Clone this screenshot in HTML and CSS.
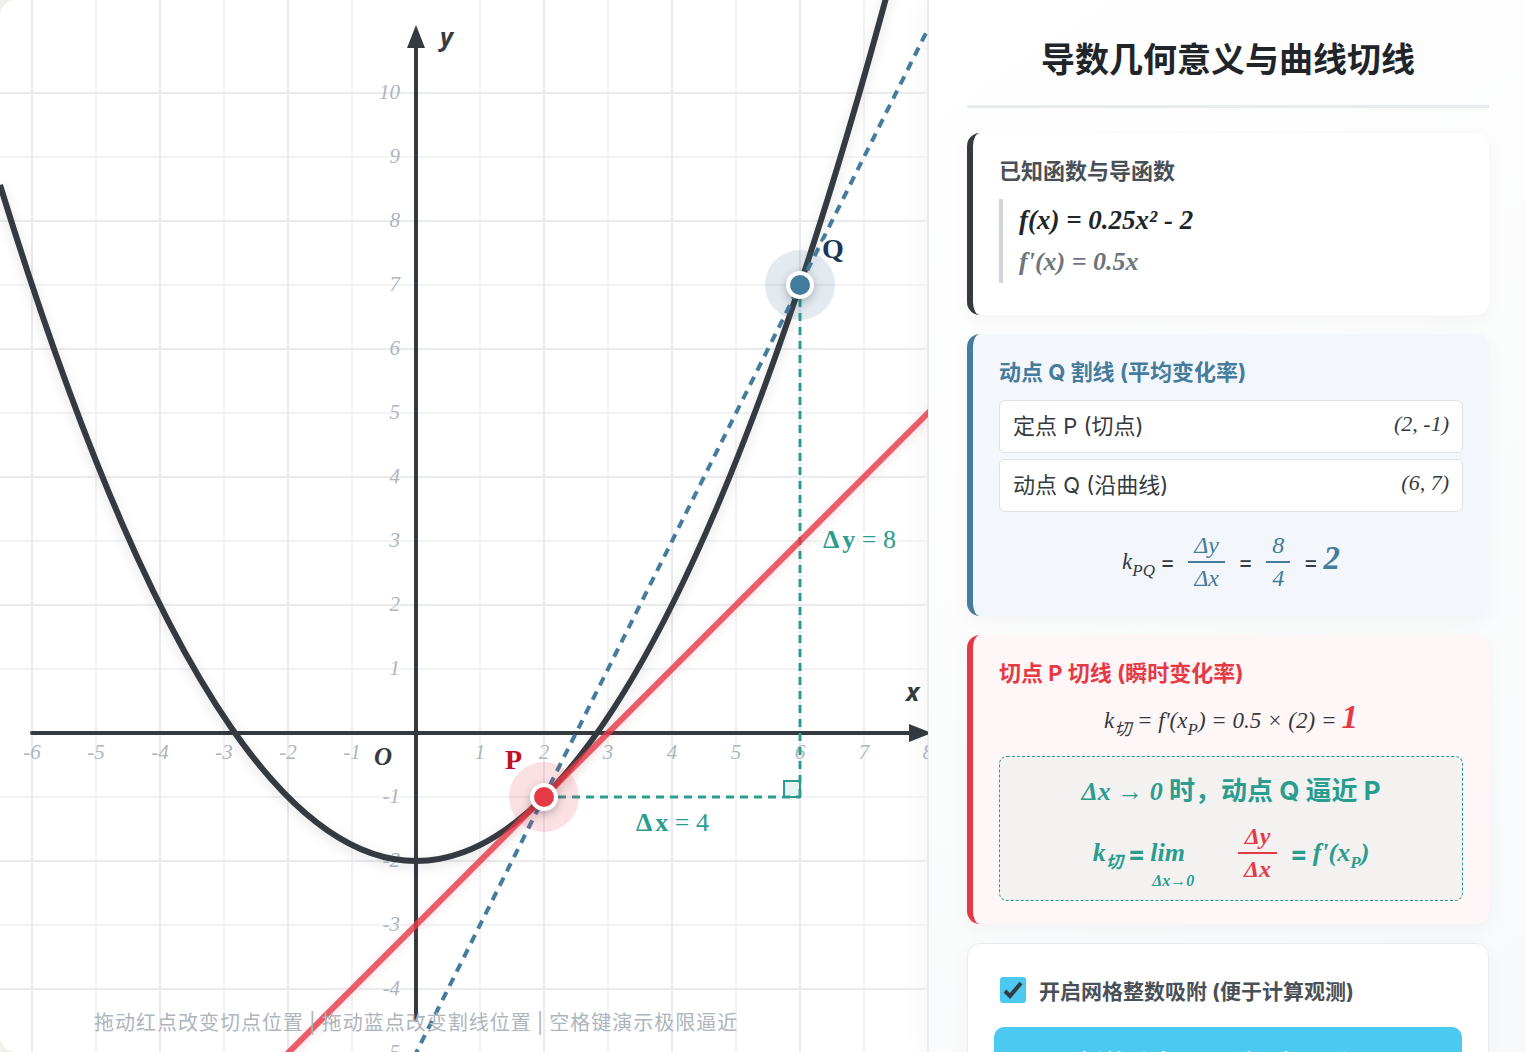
FILE: index.html
```html
<!DOCTYPE html>
<html lang="zh-CN">
<head>
<meta charset="utf-8">
<title>导数几何意义与曲线切线</title>
<link rel="stylesheet" href="styles.css">
</head>
<body>
<main class="app">
  <section class="board">
    <svg class="plot" viewBox="0 0 928 1052" preserveAspectRatio="xMidYMid slice" role="img" aria-label="函数图像">
      <path class="grid-minor" d="M96 0V1052M224 0V1052M352 0V1052M480 0V1052M608 0V1052M736 0V1052M864 0V1052M0 157H928M0 285H928M0 413H928M0 541H928M0 669H928M0 797H928M0 925H928"/>
      <path class="grid-major" d="M32 0V1052M160 0V1052M288 0V1052M544 0V1052M672 0V1052M800 0V1052M928 0V1052M0 93H928M0 221H928M0 349H928M0 477H928M0 605H928M0 861H928M0 989H928"/>
      <path class="axis" d="M32 733H912M416 1020V46"/>
      <path class="arrow" d="M416 25L425 48H407ZM932 733L909 742V724Z"/>
      <g class="ticks ticks-x">
        <text x="32" y="759">-6</text><text x="96" y="759">-5</text><text x="160" y="759">-4</text><text x="224" y="759">-3</text><text x="288" y="759">-2</text><text x="352" y="759">-1</text><text x="480" y="759">1</text><text x="544" y="759">2</text><text x="608" y="759">3</text><text x="672" y="759">4</text><text x="736" y="759">5</text><text x="800" y="759">6</text><text x="864" y="759">7</text><text x="928" y="759">8</text>
      </g>
      <g class="ticks ticks-y">
        <text x="400" y="99">10</text><text x="400" y="163">9</text><text x="400" y="227">8</text><text x="400" y="291">7</text><text x="400" y="355">6</text><text x="400" y="419">5</text><text x="400" y="483">4</text><text x="400" y="547">3</text><text x="400" y="611">2</text><text x="400" y="675">1</text><text x="400" y="803">-1</text><text x="400" y="867">-2</text><text x="400" y="931">-3</text><text x="400" y="995">-4</text><text x="400" y="1059">-5</text>
      </g>
      <text class="origin" x="374" y="765">O</text>
      <text class="axis-name" x="440" y="46">y</text>
      <text class="axis-name" x="906" y="701">x</text>
      <path class="curve" d="M0 185Q464 1693 928 -163"/>
      <path class="secant" d="M416 1053L928 29"/>
      <path class="delta" d="M544 797H800M800 797V285"/>
      <path class="corner" d="M784 797V781H800V797Z"/>
      <path class="tangent" d="M280 1061L936 405"/>
      <circle class="halo-p" cx="544" cy="797" r="35"/>
      <circle class="halo-q" cx="800" cy="285" r="35"/>
      <circle class="dot dot-p" cx="544" cy="797" r="12"/>
      <circle class="dot dot-q" cx="800" cy="285" r="12"/>
      <text class="tag tag-p" x="505" y="769">P</text>
      <text class="tag tag-q" x="822" y="258">Q</text>
      <text class="tag tag-delta" x="636" y="831">Δ<tspan dx="3">x</tspan><tspan class="amount"> = 4</tspan></text>
      <text class="tag tag-delta" x="823" y="548">Δ<tspan dx="3">y</tspan><tspan class="amount"> = 8</tspan></text>
    </svg>
    <p class="hint"><span>拖动红点改变切点位置</span><span>|</span><span>拖动蓝点改变割线位置</span><span>|</span><span>空格键演示极限逼近</span></p>
  </section>

  <aside class="panel">
    <h1 class="title">导数几何意义与曲线切线</h1>

    <section class="card card-dark">
      <h2 class="card-title">已知函数与导函数</h2>
      <div class="functions">
        <p class="fn">f(x) = 0.25x² - 2</p>
        <p class="fn fn-sub">f'(x) = 0.5x</p>
      </div>
    </section>

    <section class="card card-blue">
      <h2 class="card-title">动点 Q 割线 (平均变化率)</h2>
      <dl class="rows">
        <div class="row"><dt>定点 P (切点)</dt><dd>(2, -1)</dd></div>
        <div class="row"><dt>动点 Q (沿曲线)</dt><dd>(6, 7)</dd></div>
      </dl>
      <p class="equation equation-tall">
        <span class="math">k<sub>PQ</sub></span><span class="eq">=</span>
        <span class="frac"><span>Δy</span><span>Δx</span></span><span class="eq">=</span>
        <span class="frac"><span>8</span><span>4</span></span><span class="eq">=</span><strong class="math result">2</strong>
      </p>
    </section>

    <section class="card card-red">
      <h2 class="card-title">切点 P 切线 (瞬时变化率)</h2>
      <p class="equation"><span class="math">k<sub>切</sub> = f'(x<sub>P</sub>) = 0.5 × (2) =</span><strong class="math result">1</strong></p>
      <div class="limit">
        <p class="limit-head"><span class="math">Δx → 0</span> 时，动点 Q 逼近 P</p>
        <p class="limit-eq">
          <span class="math">k<sub>切</sub></span><span class="eq">=</span>
          <span class="math lim">lim<small>Δx→0</small></span>
          <span class="frac frac-red"><span>Δy</span><span>Δx</span></span><span class="eq">=</span><span class="math">f'(x<sub>P</sub>)</span>
        </p>
      </div>
    </section>

    <section class="card card-controls">
      <label class="check"><input type="checkbox" checked>开启网格整数吸附 (便于计算观测)</label>
      <button class="play" type="button">播放动点 Q 逼近 P 极限动画</button>
    </section>
  </aside>
</main>
</body>
</html>
```
FILE: styles.css
```css
* { box-sizing: border-box; margin: 0; }

body {
  height: 100vh;
  overflow: hidden;
  background: #f1efea;
  color: #343a40;
  font-family: Inter, "Noto Sans CJK SC", sans-serif;
}

.app {
  display: grid;
  grid-template-columns: minmax(0, 1fr) 598px;
  height: 100vh;
  border-radius: 16px 0 0 16px;
  overflow: hidden;
  background: #fff;
}

/* Graph */
.board { position: relative; min-width: 0; overflow: hidden; }
.plot { display: block; width: 100%; height: 100%; }
.plot path { fill: none; }
.plot .grid-minor { stroke: #f1f3f5; stroke-width: 2; }
.plot .grid-major { stroke: #e9ebef; stroke-width: 2; }
.plot .axis { stroke: #343a40; stroke-width: 4; stroke-linecap: round; }
.plot .arrow { fill: #343a40; }
.plot .curve { stroke: #343a40; stroke-width: 6; filter: drop-shadow(0 4px 6px rgba(0, 0, 0, .12)); }
.plot .secant { stroke: #457b9d; stroke-width: 4; stroke-dasharray: 9 7; stroke-dashoffset: 5; }
.plot .tangent { stroke: #e63946; stroke-width: 6; opacity: .82; filter: drop-shadow(0 3px 4px rgba(230, 57, 70, .2)); }
.plot .delta { stroke: #2a9d8f; stroke-width: 3; stroke-dasharray: 8 6; }
.plot .corner { stroke: #2a9d8f; stroke-width: 2; fill: rgba(42, 157, 143, .1); }
.halo-p { fill: #e63946; opacity: .15; }
.halo-q { fill: #457b9d; opacity: .15; }
.dot { stroke: #fff; stroke-width: 4; filter: drop-shadow(0 3px 5px rgba(0, 0, 0, .25)); }
.dot-p { fill: #e63946; }
.dot-q { fill: #457b9d; }
.plot text { font-family: "Liberation Serif", serif; }
.ticks { fill: #adb5bd; font-size: 21px; font-style: italic; }
.ticks-x { text-anchor: middle; }
.ticks-y { text-anchor: end; }
.plot .origin { fill: #343a40; font-size: 25px; font-weight: 700; font-style: italic; }
.plot .axis-name { fill: #343a40; font: italic 700 25px "Noto Sans", sans-serif; }
.tag { font-size: 28px; font-weight: 700; paint-order: stroke; stroke: #fff; stroke-width: 5px; stroke-linejoin: round; }
.tag-p { fill: #c1121f; }
.tag-q { fill: #1d3557; }
.tag-delta { fill: #2a9d8f; font-size: 26px; }
.amount { font-weight: 400; }
.hint {
  position: absolute;
  left: 94px;
  bottom: 14px;
  display: flex;
  gap: 5px;
  color: #adb5bd;
  font-size: 20px;
  line-height: 30px;
  letter-spacing: 1px;
  white-space: nowrap;
  pointer-events: none;
}

/* Side panel */
.panel {
  display: flex;
  flex-direction: column;
  gap: 19px;
  padding: 32px 37px 32px 38px;
  border-left: 1px solid #e9ecef;
  background: linear-gradient(145deg, #fff, #f8f9fa);
  box-shadow: -6px 0 24px rgba(0, 0, 0, .04);
  overflow-y: auto;
  scrollbar-width: none;
}
.title {
  flex: none;
  height: 76px;
  margin-bottom: 6px;
  border-bottom: 3px solid #e9ecef;
  color: #212529;
  font-size: 34px;
  line-height: 56px;
  text-align: center;
}
.card {
  flex: none;
  padding: 26px;
  border-left: 6px solid;
  border-radius: 13px;
  box-shadow: 0 5px 18px rgba(0, 0, 0, .04);
}
.card-dark { border-color: #343a40; background: #fff; padding-bottom: 32px; }
.card-blue { border-color: #457b9d; background: #f3f7fb; }
.card-red { border-color: #e63946; background: #fff6f7; padding-bottom: 23px; }
.card-controls { border: 1px solid #e9ecef; background: #fff; }
.card-title { margin-bottom: 16px; color: #495057; font-size: 22px; line-height: 24px; }
.card-blue .card-title { color: #457b9d; }
.card-red .card-title { color: #e63946; }

.math, .fn, .frac, .row dd { font-family: "Liberation Serif", "Noto Sans CJK SC", serif; font-style: italic; }
sub { font-size: 17px; line-height: 0; vertical-align: -7px; }

.functions { padding-left: 16px; border-left: 4px solid #ced4da; }
.fn { color: #212529; font-size: 27px; font-weight: 700; line-height: 42px; }
.fn-sub { color: #6c757d; font-size: 26px; }

.rows { display: grid; gap: 6px; }
.row {
  display: flex;
  justify-content: space-between;
  height: 53px;
  padding: 0 13px;
  border: 1px solid #dee2e6;
  border-radius: 6px;
  background: #fff;
  font-size: 22px;
  line-height: 51px;
}
.row dd { line-height: 46px; }

.equation { display: flex; align-items: center; justify-content: center; gap: 5px; height: 55px; padding-bottom: 15px; font-size: 23px; }
.equation-tall { height: 78px; padding: 22px 0 0; }
.frac { display: inline-grid; margin: 0 8px; color: #457b9d; font-size: 24px; line-height: 31px; text-align: center; }
.frac span { padding: 0 6px; }
.frac span + span { border-top: 2px solid; }
.result { padding-bottom: 8px; color: #457b9d; font-size: 33px; }
.card-red .result { color: #e63946; }

.limit {
  height: 145px;
  padding: 14px 16px;
  border: 1px dashed #2a9d8f;
  border-radius: 8px;
  background: #f3f2f1;
  color: #2a9d8f;
  font-weight: 700;
  text-align: center;
}
.limit-head { font-size: 26px; line-height: 40px; }
.limit-eq { display: flex; align-items: center; justify-content: center; gap: 5px; margin-top: 9px; font-size: 26px; }
.lim { position: relative; margin-right: 40px; }
.lim small { position: absolute; top: 34px; left: 2px; font-size: 16px; white-space: nowrap; }
.frac-red { color: #e63946; }

.check { display: flex; align-items: center; gap: 13px; height: 40px; padding-left: 6px; color: #495057; font-size: 21px; font-weight: 700; }
.check input {
  appearance: none;
  width: 26px;
  height: 26px;
  margin: 0;
  border-radius: 3px;
  background: #4cc9f0 url("data:image/svg+xml,%3Csvg xmlns='http://www.w3.org/2000/svg' viewBox='0 0 26 26'%3E%3Cpath d='M5 14l5 5L21 6' fill='none' stroke='%23343a40' stroke-width='4'/%3E%3C/svg%3E");
}
.play {
  width: 100%;
  height: 68px;
  margin-top: 17px;
  border: 0;
  border-radius: 10px;
  background: #4cc9f0;
  color: #fff;
  font: 700 24px Inter, "Noto Sans CJK SC", sans-serif;
}
```
